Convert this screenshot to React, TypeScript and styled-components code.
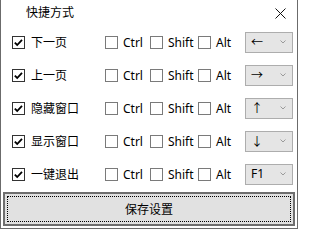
import React from 'react';
import styled, {createGlobalStyle} from 'styled-components';

const GlobalStyle = createGlobalStyle`
    html, body {
        margin: 0;
        padding: 0;
        background: #ffffff;
    }
    * {
        box-sizing: border-box;
    }
`

type Shortcut = {
    label: string
    key: string
    arrow?: boolean
}

const shortcuts: Shortcut[] = [
    {label: '下一页', key: '←', arrow: true},
    {label: '上一页', key: '→', arrow: true},
    {label: '隐藏窗口', key: '↑', arrow: true},
    {label: '显示窗口', key: '↓', arrow: true},
    {label: '一键退出', key: 'F1'},
]

const CheckMark = () => (
    <svg width="11" height="11" viewBox="0 0 11 11">
        <path d="M1.8 5.6 L4.2 8 L9 2.8" fill="none" stroke="#000" strokeWidth="1.8"/>
    </svg>
)

const Chevron = () => (
    <svg width="6" height="4" viewBox="0 0 6 4">
        <path d="M0.5 0.5 L3 3 L5.5 0.5" fill="none" stroke="#9a9a9a" strokeWidth="1"/>
    </svg>
)

const CloseIcon = () => (
    <svg width="11" height="11" viewBox="0 0 11 11">
        <path d="M0.5 0.5 L10.5 10.5 M10.5 0.5 L0.5 10.5" fill="none" stroke="#111" strokeWidth="1"/>
    </svg>
)

const Check = ({checked}: { checked?: boolean }) => (
    <Box $checked={checked}>{checked && <CheckMark/>}</Box>
)

export default function App() {
    return (
        <>
            <GlobalStyle/>
            <Window>
                <Header>
                    <Title>快捷方式</Title>
                    <Close><CloseIcon/></Close>
                </Header>
                <List>
                    {shortcuts.map(s => (
                        <Row key={s.label}>
                            <Main>
                                <Check checked/>
                                <Label>{s.label}</Label>
                            </Main>
                            <Option $width={45}>
                                <Check/>
                                <Label>Ctrl</Label>
                            </Option>
                            <Option $width={48}>
                                <Check/>
                                <Label>Shift</Label>
                            </Option>
                            <Option $width={47}>
                                <Check/>
                                <Label>Alt</Label>
                            </Option>
                            <Select>
                                <SelectValue $arrow={s.arrow}>{s.key}</SelectValue>
                                <Chevron/>
                            </Select>
                        </Row>
                    ))}
                </List>
                <SaveButton>保存设置</SaveButton>
            </Window>
        </>
    )
}

const Window = styled.div`
    width: 298px;
    height: 229px;
    display: flex;
    flex-direction: column;
    border: 1px solid #6b6b6b;
    border-top: none;
    background: #ffffff;
    font-family: "Noto Sans", "Noto Sans CJK SC", sans-serif;
    font-size: 12px;
    color: #000;
`

const Header = styled.div`
    height: 26px;
    display: flex;
    align-items: center;
    justify-content: space-between;
    padding: 0 11px 0 25px;
`

const Title = styled.div`
    font-size: 12px;
    line-height: 1;
`

const Close = styled.div`
    display: flex;
    margin-top: 1px;
`

const List = styled.div`
    display: flex;
    flex-direction: column;
    padding-left: 11px;
`

const Row = styled.div`
    height: 33px;
    display: flex;
    align-items: center;
`

const Main = styled.div`
    width: 93px;
    display: flex;
    align-items: center;
    gap: 6px;
`

const Option = styled.div<{ $width: number }>`
    width: ${p => p.$width}px;
    display: flex;
    align-items: center;
    gap: 5px;
`

const Box = styled.span<{ $checked?: boolean }>`
    width: 13px;
    height: 13px;
    flex: none;
    display: flex;
    align-items: center;
    justify-content: center;
    border: 1px solid ${p => p.$checked ? '#333333' : '#7a7a7a'};
    background: #fff;
`

const Label = styled.span`
    line-height: 1;
    white-space: nowrap;
`

const Select = styled.div`
    width: 48px;
    height: 21px;
    margin-top: -1px;
    display: flex;
    align-items: center;
    justify-content: space-between;
    padding: 0 6px 0 5px;
    background: #e5e5e5;
    border: 1px solid #adadad;
`

const SelectValue = styled.span<{ $arrow?: boolean }>`
    font-family: ${p => p.$arrow ? '"Noto Sans CJK SC", sans-serif' : '"Noto Sans", sans-serif'};
    font-size: 12px;
    line-height: 1;
`

const SaveButton = styled.div`
    position: relative;
    margin: 1px 2px 0;
    height: 34px;
    display: flex;
    align-items: center;
    justify-content: center;
    background: #e1e1e1;
    border: 2px solid #6e6e6e;
    font-size: 12px;

    &::after {
        content: '';
        position: absolute;
        inset: 2px;
        border: 1px dotted #000;
    }
`
